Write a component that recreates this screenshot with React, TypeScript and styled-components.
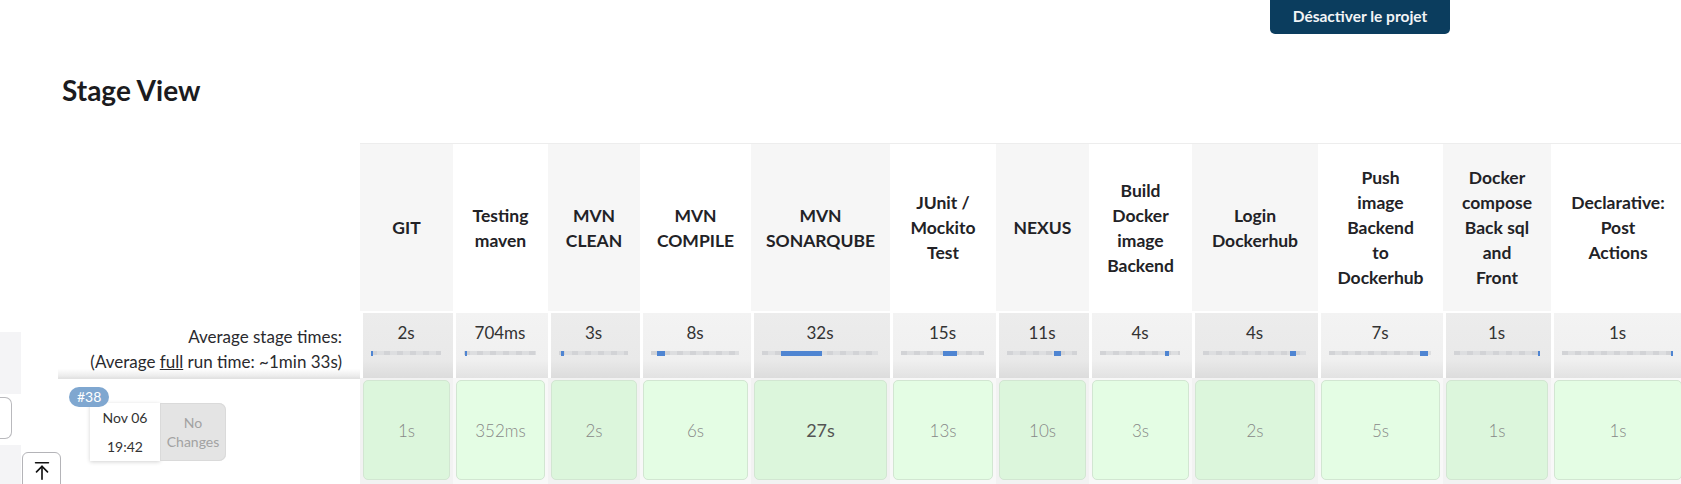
import styled, { createGlobalStyle } from "styled-components";
import { ArrowUpToLine } from "lucide-react";

const GlobalStyle = createGlobalStyle`
  html, body {
    margin: 0;
    padding: 0;
    background: #fff;
  }
  body {
    font-family: Lato, "Noto Sans", sans-serif;
    color: #1e1e22;
  }
`;

type stageType = {
  name: string[];
  width: number;
  avg: string;
  barLeft: number;
  barWidth: number;
  run: string;
  strong?: boolean;
};

const stages: stageType[] = [
  { name: ["GIT"], width: 93, avg: "2s", barLeft: 0, barWidth: 2, run: "1s" },
  { name: ["Testing", "maven"], width: 95, avg: "704ms", barLeft: 1, barWidth: 2, run: "352ms" },
  { name: ["MVN", "CLEAN"], width: 92, avg: "3s", barLeft: 3, barWidth: 4, run: "2s" },
  { name: ["MVN", "COMPILE"], width: 111, avg: "8s", barLeft: 7, barWidth: 9, run: "6s" },
  { name: ["MVN", "SONARQUBE"], width: 139, avg: "32s", barLeft: 16, barWidth: 36, run: "27s", strong: true },
  { name: ["JUnit /", "Mockito", "Test"], width: 106, avg: "15s", barLeft: 51, barWidth: 16, run: "13s" },
  { name: ["NEXUS"], width: 93, avg: "11s", barLeft: 67, barWidth: 10, run: "10s" },
  { name: ["Build", "Docker", "image", "Backend"], width: 103, avg: "4s", barLeft: 81, barWidth: 5, run: "3s" },
  { name: ["Login", "Dockerhub"], width: 126, avg: "4s", barLeft: 84, barWidth: 6, run: "2s" },
  { name: ["Push", "image", "Backend", "to", "Dockerhub"], width: 125, avg: "7s", barLeft: 89, barWidth: 8, run: "5s" },
  { name: ["Docker", "compose", "Back sql", "and", "Front"], width: 108, avg: "1s", barLeft: 98.5, barWidth: 1.5, run: "1s" },
  { name: ["Declarative:", "Post", "Actions"], width: 134, avg: "1s", barLeft: 98.5, barWidth: 1.5, run: "1s" },
];

const columns = `302px ${stages.map((s) => `${s.width}px`).join(" ")}`;

const Page = styled.div`
  position: relative;
  display: flex;
  width: 100vw;
  height: 484px;
  overflow: hidden;
`;

const Sidebar = styled.div`
  flex: 0 0 58px;
  display: flex;
  flex-direction: column;
  padding-top: 332px;
`;

const SideBlock = styled.div`
  width: 21px;
  height: 64px;
  background: #f4f4f6;
`;

const SideField = styled.div`
  width: 11px;
  height: 42px;
  margin: 3px 0 6px;
  border: 1px solid #b9b9bd;
  border-left: none;
  border-radius: 0 7px 7px 0;
  background: #fff;
`;

const SideBlockRest = styled(SideBlock)`
  height: 40px;
`;

const ScrollTopButton = styled.button`
  position: absolute;
  left: 22px;
  top: 452px;
  width: 39px;
  height: 44px;
  padding: 7px 0 0;
  display: flex;
  justify-content: center;
  align-items: flex-start;
  background: #fff;
  border: 1px solid #b4b4b8;
  border-radius: 6px;
  color: #111;
`;

const Main = styled.div`
  flex: 1;
  display: flex;
  flex-direction: column;
  min-width: 0;
`;

const TopBar = styled.div`
  display: flex;
  justify-content: flex-end;
  padding-right: 231px;
`;

const DisableButton = styled.button`
  width: 180px;
  height: 34px;
  padding: 0 0 2px;
  border: none;
  border-radius: 0 0 5px 5px;
  background: #0b3d5e;
  color: #f2f4f6;
  font-family: inherit;
  font-size: 15.5px;
  font-weight: 700;
`;

const Title = styled.h2`
  margin: 39px 0 36px 4px;
  font-size: 28px;
  line-height: 34px;
  font-weight: 700;
  color: #1b1b20;
`;

const StageTable = styled.div`
  display: grid;
  grid-template-columns: ${columns};
  grid-template-rows: 168px 67px 110px;
  width: max-content;
`;

const BlankCell = styled.div`
  background: #fff;
`;

const HeaderCell = styled.div<{ $shaded: boolean }>`
  display: flex;
  flex-direction: column;
  justify-content: center;
  align-items: center;
  border-top: 1px solid #ededed;
  background: ${({ $shaded }) => ($shaded ? "#f6f6f6" : "#fff")};
  font-size: 17.5px;
  line-height: 25px;
  font-weight: 700;
  color: #222226;
  text-align: center;
  white-space: nowrap;
`;

const AvgLabel = styled.div`
  padding: 13px 18px 0 0;
  text-align: right;
  font-size: 17px;
  line-height: 25px;
  color: #2a2a2e;
  background: linear-gradient(to bottom, #fff 86%, #ececec 97%, #e2e2e2);

  u {
    text-decoration-thickness: 1px;
  }
`;

const AvgCell = styled.div<{ $shaded: boolean }>`
  margin: 2px 0 0 3px;
  padding: 9px 12px 0 8px;
  background: ${({ $shaded }) =>
    $shaded
      ? "linear-gradient(to bottom, #ececec, #e9e9e9 72%, #dcdcdc)"
      : "linear-gradient(to bottom, #f3f3f3, #f0f0f0 72%, #e2e2e2)"};
  text-align: center;

  &:nth-child(14) {
    margin-left: 0;
  }
`;

const AvgTime = styled.div`
  font-size: 17px;
  line-height: 22px;
  color: #333;
`;

const Bar = styled.div`
  position: relative;
  height: 4px;
  margin-top: 7px;
  background: repeating-linear-gradient(
    to right,
    #d2d3d6 0,
    #d2d3d6 6px,
    #dddee0 6px,
    #dddee0 13px
  );
`;

const BarFill = styled.div`
  position: absolute;
  top: -0.5px;
  bottom: -0.5px;
  min-width: 2px;
  background: #4f85d2;
`;

const BuildLabel = styled.div`
  padding: 24px 0 0 32px;
  border-top: 1px solid #e2e2e2;
  background: #fff;
`;

const BuildCard = styled.div`
  position: relative;
  display: flex;
  width: max-content;
`;

const BuildBadge = styled.span`
  position: absolute;
  left: -21px;
  top: -16px;
  z-index: 1;
  padding: 0 8px;
  height: 20px;
  line-height: 20px;
  border-radius: 10px;
  background: #7fa7d0;
  color: #fff;
  font-size: 14px;
`;

const BuildDate = styled.div`
  width: 70px;
  height: 58px;
  display: flex;
  flex-direction: column;
  justify-content: center;
  align-items: center;
  gap: 9px;
  background: #fff;
  box-shadow: 0 1px 4px rgba(0, 0, 0, 0.18);
  font-size: 14px;
  line-height: 20px;
  color: #333;
`;

const BuildChanges = styled.div`
  width: 66px;
  height: 58px;
  display: flex;
  flex-direction: column;
  justify-content: center;
  align-items: center;
  border-radius: 0 7px 7px 0;
  background: #e4e4e4;
  box-shadow: inset 0 0 0 1px #dadada;
  font-size: 14px;
  line-height: 19px;
  color: #a2a2a2;
  text-align: center;
`;

const RunCell = styled.div<{ $shaded: boolean }>`
  padding: 2px 3px 0;
  background: ${({ $shaded }) => ($shaded ? "#f2f2f2" : "#f8f8f8")};
`;

const RunBox = styled.div<{ $shaded: boolean; $strong?: boolean }>`
  height: 100px;
  display: flex;
  justify-content: center;
  align-items: center;
  box-sizing: border-box;
  border: 1px solid #d2e6d2;
  border-radius: 5px;
  background: ${({ $shaded }) => ($shaded ? "#dcf6dc" : "#e4fde4")};
  font-size: ${({ $strong }) => ($strong ? "18px" : "17px")};
  font-weight: ${({ $strong }) => ($strong ? 400 : 300)};
  color: ${({ $strong }) => ($strong ? "#545454" : "#878787")};
`;

const App = () => {
  return (
    <Page>
      <GlobalStyle />
      <Sidebar>
        <SideBlock />
        <SideField />
        <SideBlockRest />
      </Sidebar>
      <ScrollTopButton aria-label="Haut de page">
        <ArrowUpToLine size={22} strokeWidth={1.8} />
      </ScrollTopButton>
      <Main>
        <TopBar>
          <DisableButton>Désactiver le projet</DisableButton>
        </TopBar>
        <Title>Stage View</Title>
        <StageTable>
          <BlankCell />
          {stages.map((stage, i) => (
            <HeaderCell key={`h${i}`} $shaded={i % 2 === 0}>
              {stage.name.map((line) => (
                <span key={line}>{line}</span>
              ))}
            </HeaderCell>
          ))}

          <AvgLabel>
            Average stage times:
            <br />
            (Average <u>full</u> run time: ~1min 33s)
          </AvgLabel>
          {stages.map((stage, i) => (
            <AvgCell key={`a${i}`} $shaded={i % 2 === 0}>
              <AvgTime>{stage.avg}</AvgTime>
              <Bar>
                <BarFill
                  style={{ left: `${stage.barLeft}%`, width: `${stage.barWidth}%` }}
                />
              </Bar>
            </AvgCell>
          ))}

          <BuildLabel>
            <BuildCard>
              <BuildBadge>#38</BuildBadge>
              <BuildDate>
                <span>Nov 06</span>
                <span>19:42</span>
              </BuildDate>
              <BuildChanges>
                No
                <br />
                Changes
              </BuildChanges>
            </BuildCard>
          </BuildLabel>
          {stages.map((stage, i) => (
            <RunCell key={`r${i}`} $shaded={i % 2 === 0}>
              <RunBox $shaded={i % 2 === 0} $strong={stage.strong}>
                {stage.run}
              </RunBox>
            </RunCell>
          ))}
        </StageTable>
      </Main>
    </Page>
  );
};

export default App;
